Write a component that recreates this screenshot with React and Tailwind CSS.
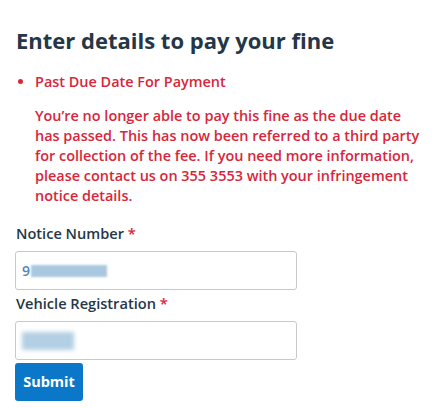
import React from 'react';

const font = { fontFamily: '"Open Sans", "Noto Sans", sans-serif' };

const Field = ({ label, children }) => (
  <div>
    <label className="block text-[14.6px] leading-[22px] font-semibold text-[#253746] mb-[7px]">
      {label} <span className="text-[#d8263b]">*</span>
    </label>
    <div className="-ml-px w-[282px] h-[39px] border border-[#c9c9c9] rounded-[3px] bg-white flex items-center px-[6px]">
      {children}
    </div>
  </div>
);

export default function App() {
  return (
    <div style={font} className="min-h-screen bg-white px-4 pt-[24px]">
      <h1 className="text-[22px] leading-[32px] font-bold text-[#253746]">
        Enter details to pay your fine
      </h1>

      <ul className="mt-[16px] list-disc pl-[19px] text-[#d8263b] marker:text-[#d8263b]">
        <li className="text-[14.45px] leading-[20px] font-semibold">
          <div>Past Due Date For Payment</div>
          <p className="mt-[14px] pr-2">
            You’re no longer able to pay this fine as the due date has passed. This has now been
            referred to a third party for collection of the fee. If you need more information,
            please contact us on 355 3553 with your infringement notice details.
          </p>
        </li>
      </ul>

      <div className="mt-[16px] flex flex-col gap-[2px]">
        <Field label="Notice Number">
          <span className="text-[14px] font-semibold text-[#4f86b8]">9</span>
          <span className="ml-[1px] w-[76px] h-[12px] bg-[#a9c8df] blur-[1px]" />
        </Field>
        <Field label="Vehicle Registration">
          <span className="w-[52px] h-[18px] bg-[#b3cfe3] blur-[2px]" />
        </Field>
      </div>

      <button
        type="button"
        className="-ml-px mt-[3px] h-[38px] w-[68px] bg-[#0b77c9] text-white text-[14.5px] font-bold rounded-[3px]"
      >
        Submit
      </button>
    </div>
  );
}
